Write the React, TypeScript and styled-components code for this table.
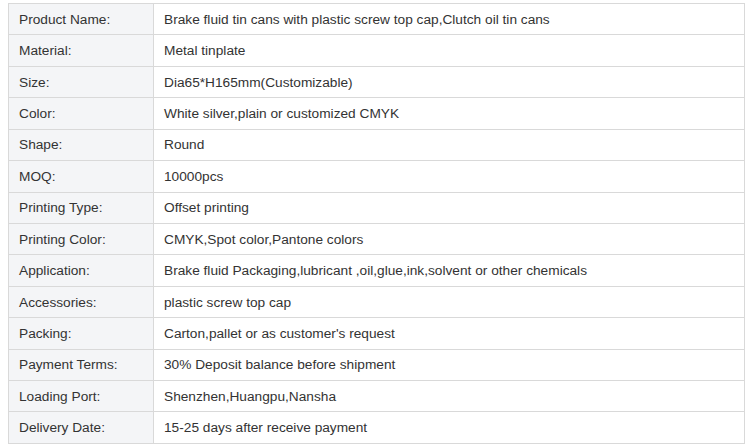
import React from "react";
import styled, { createGlobalStyle } from "styled-components";

const GlobalStyle = createGlobalStyle`
  body {
    margin: 0;
    padding: 3px 5px 0 8px;
    background: #fff;
    font-family: "Liberation Sans", Arial, sans-serif;
  }
`;

const SpecTable = styled.table`
  width: 737px;
  border-collapse: collapse;
  font-size: 13.7px;
  color: #333;
`;

const Row = styled.tr`
  height: calc(440px / 14);
`;

const Cell = styled.td<{ $label?: boolean }>`
  border: 1px solid #d9d9d9;
  padding: 0 10px;
  vertical-align: middle;
  text-align: left;
  white-space: nowrap;
  width: ${(p) => (p.$label ? "124px" : "auto")};
  background: ${(p) => (p.$label ? "#f4f5f7" : "#fff")};
`;

const specs: [string, string][] = [
  ["Product Name:", "Brake fluid tin cans with plastic screw top cap,Clutch oil tin cans"],
  ["Material:", "Metal tinplate"],
  ["Size:", "Dia65*H165mm(Customizable)"],
  ["Color:", "White silver,plain or customized CMYK"],
  ["Shape:", "Round"],
  ["MOQ:", "10000pcs"],
  ["Printing Type:", "Offset printing"],
  ["Printing Color:", "CMYK,Spot color,Pantone colors"],
  ["Application:", "Brake fluid Packaging,lubricant ,oil,glue,ink,solvent or other chemicals"],
  ["Accessories:", "plastic screw top cap"],
  ["Packing:", "Carton,pallet or as customer's request"],
  ["Payment Terms:", "30% Deposit balance before shipment"],
  ["Loading Port:", "Shenzhen,Huangpu,Nansha"],
  ["Delivery Date:", "15-25 days after receive payment"],
];

export default function App() {
  return (
    <>
      <GlobalStyle />
      <SpecTable>
        <tbody>
          {specs.map(([label, value]) => (
            <Row key={label}>
              <Cell $label>{label}</Cell>
              <Cell>{value}</Cell>
            </Row>
          ))}
        </tbody>
      </SpecTable>
    </>
  );
}
